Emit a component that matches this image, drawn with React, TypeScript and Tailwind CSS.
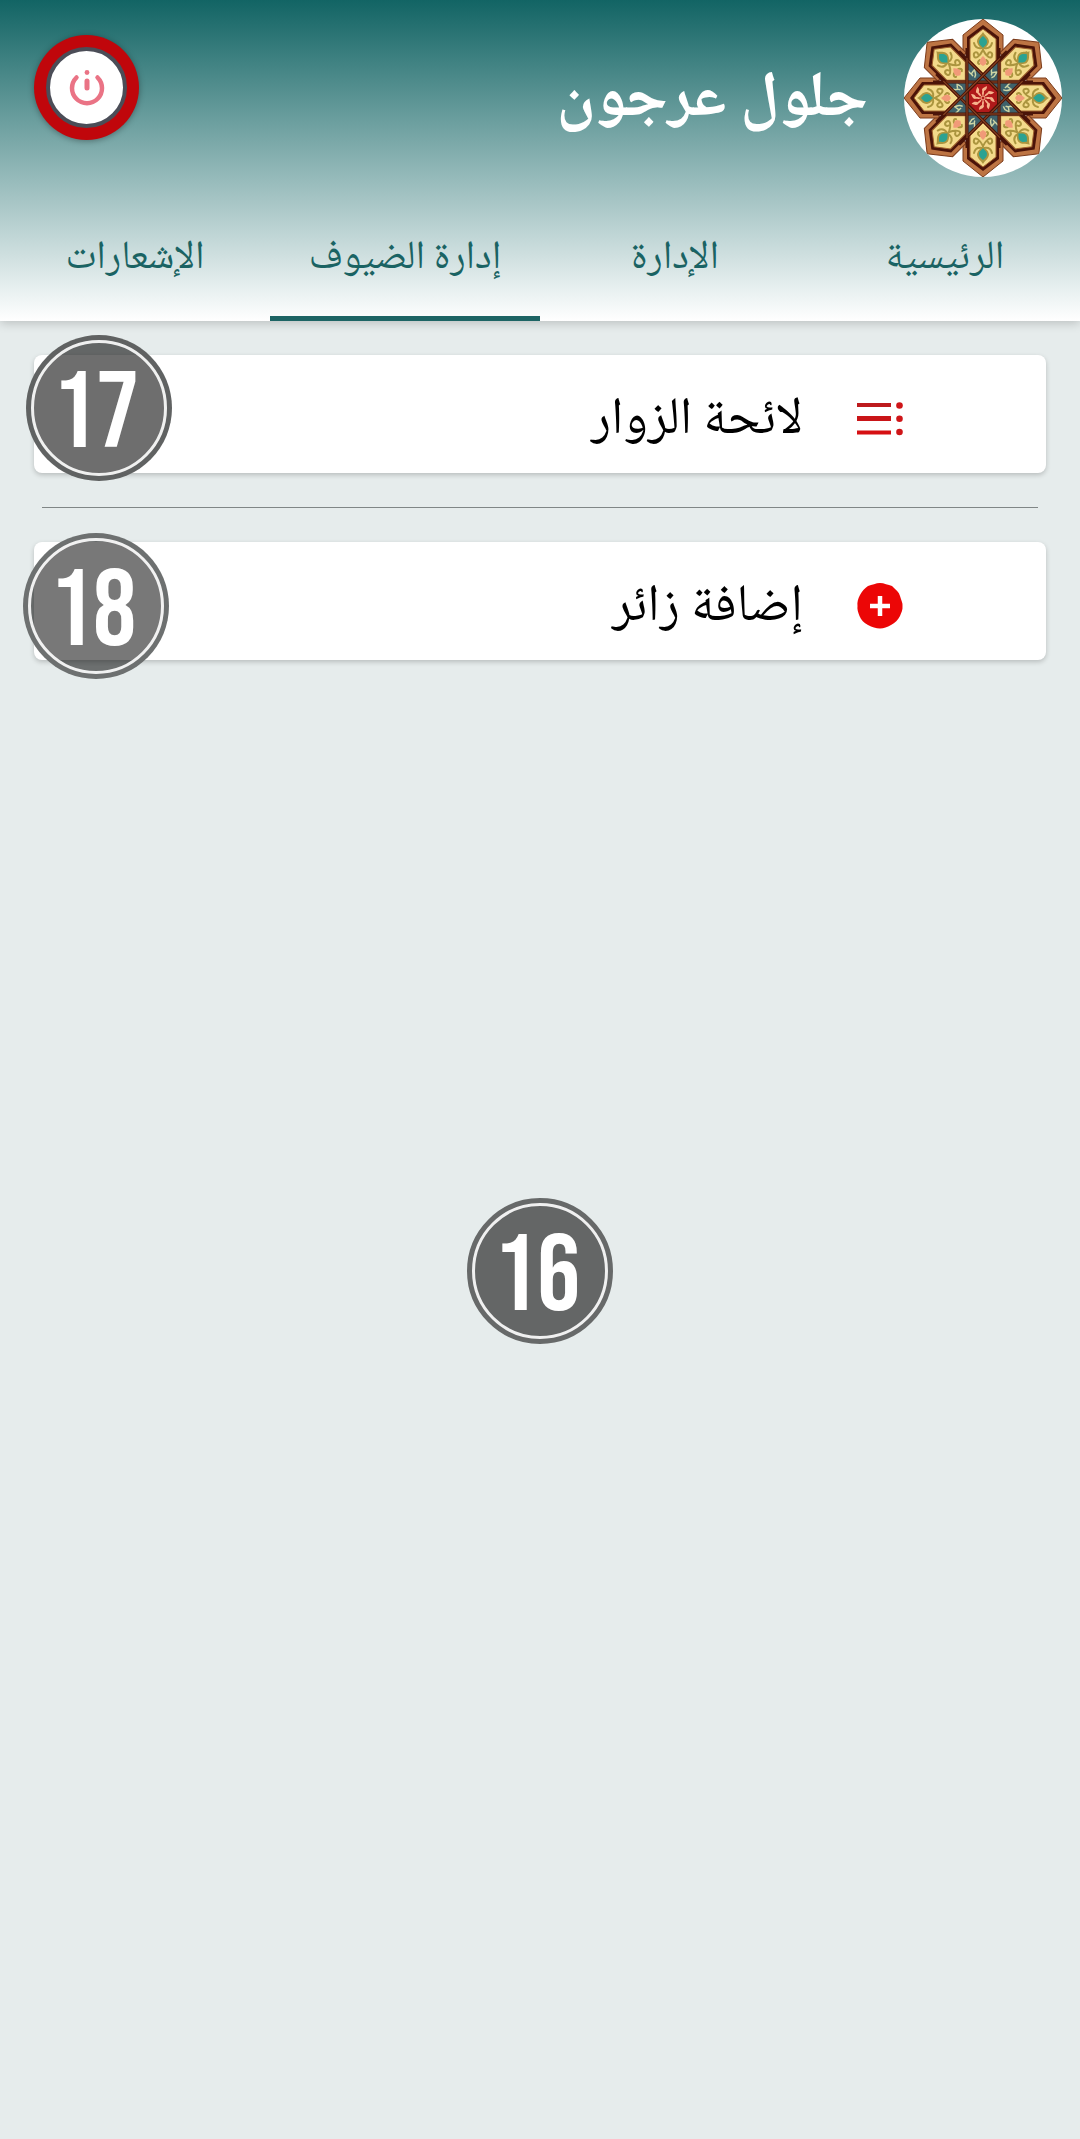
import type { ReactNode } from "react";

const TURNS = [0, 45, 90, 135, 180, 225, 270, 315];

function Petal({ angle }: { angle: number }) {
  return (
    <g transform={`rotate(${angle})`}>
      <path d="M0-79 20-63V-44H-20V-63Z" fill="#bd7443" stroke="#7c3c1c" strokeWidth="1" />
      <path d="M0-73 16-61V-38H-16V-61Z" fill="#4b1409" />
    </g>
  );
}

function PetalInside({ angle }: { angle: number }) {
  return (
    <g transform={`rotate(${angle})`}>
      <path d="M0-69 13-59V-38L0-25-13-38V-59Z" fill="#f3da8b" stroke="#a0622f" strokeWidth="1" />
      <g fill="none" stroke="#ab953f" strokeWidth="2" strokeLinecap="round">
        <path d="M0-48C-3-42-8-38-9-42-10-46-6-47-5-44" />
        <path d="M0-48C3-42 8-38 9-42 10-46 6-47 5-44" />
        <path d="M-1-50C-6-49-8-51-9-55M1-50C6-49 8-51 9-55" />
        <path d="M-4-34C-6-35-5-37-3-38M4-34C6-35 5-37 3-38" />
      </g>
      <path d="M0-66C2-62 6-61 6-56 5-52 2-50 0-49-2-50-5-52-6-56-6-61-2-62 0-66Z" fill="#ab953f" />
      <path d="M0-62C2-60 4-59 4-56 4-53 1-52 0-50-1-52-4-53-4-56-4-59-2-60 0-62Z" fill="#2ba291" />
      <path d="M0-42C3-39 4-37 3-34L0-32-3-34C-4-37-3-39 0-42Z" fill="#f19a78" />
    </g>
  );
}

function Emblem() {
  return (
    <svg viewBox="-79 -79 158 158" className="size-[158px] shrink-0 rounded-full bg-white" role="img" aria-label="شعار">
      {TURNS.map((a) => <Petal key={a} angle={a} />)}
      <circle r="42" fill="#4b1409" />
      {TURNS.map((a) => <path key={a} transform={`rotate(${a})`} d="M16-16H38L16 6Z" fill="#3e626b" />)}
      {TURNS.map((a) => <PetalInside key={a} angle={a} />)}
      {TURNS.map((a) => (
        <path
          key={a}
          transform={`rotate(${a + 22.5})`}
          d="M-3-31C-4-28-1-28-1-24M3-30C2-27 4-25 0-22M-1-27 2-29"
          fill="none"
          stroke="#cfd6a5"
          strokeWidth="1.5"
        />
      ))}
      {TURNS.map((a) => (
        <g key={a} transform={`rotate(${a})`}>
          <path d="M-50-16H50" stroke="#4b1409" strokeWidth="3" />
          <path d="M-40-16H40" stroke="#8e4a26" strokeWidth="1" />
        </g>
      ))}
      <path d="M-6-14H6L14-6V6L6 14H-6L-14 6V-6Z" fill="#b01a1a" />
      {TURNS.map((a) => (
        <path key={a} transform={`rotate(${a})`} d="M0-2C-2-5 0-6-1-8-1-10 2-11 4-12 4-9 3-8 1-7 1-5 1-4 0-2Z" fill="#f7b48c" />
      ))}
      <circle r="2" fill="#b01a1a" stroke="#f7b48c" strokeWidth="1" />
    </svg>
  );
}

function PowerIcon() {
  return (
    <svg viewBox="0 0 36 36" className="size-9" fill="none" stroke="#ea7385" strokeWidth="4.500" strokeLinecap="round" aria-hidden="true">
      <path d="M7.500 7.500A15 15 0 1 0 28.500 7.500" />
      <path d="M18 11V18" strokeWidth="5" />
      <circle cx="18" cy="2.500" r="2.400" fill="#ea7385" stroke="none" />
    </svg>
  );
}

function ListIcon() {
  return (
    <svg viewBox="0 0 46 34" className="w-[46px]" aria-hidden="true">
      <path d="M0 1H34V5H0Z" fill="#bd1a1d" />
      <path d="M0 14H34V19H0Z" fill="#c91518" />
      <path d="M0 28.500H34V32.500H0Z" fill="#d61013" />
      <circle cx="42.500" cy="3.500" r="3.300" fill="#cf1518" />
      <circle cx="42.500" cy="16.700" r="3.300" fill="#cf1518" />
      <circle cx="42.500" cy="30" r="3.300" fill="#cf1518" />
    </svg>
  );
}

function AddIcon() {
  return (
    <svg viewBox="0 0 46 46" className="w-[46px]" aria-hidden="true">
      <path d="M23 0C27 0 31 2 35 3 39 7 42 9 43 13 44 17 46 20 45.500 23 46 27 44 30 43 33 41 37 38 40 34 42 30 44 27 45.500 23 45.500 19 45.500 15 44 11 42 7 40 4 37 2.500 33 1 29 0 26 .5 23 0 19 1 16 3 12 5 8 8 5 11 3 15 2 19 0 23 0Z" fill="#ec0606" />
      <path d="M23 13V33M13 23H33" stroke="#fff" strokeWidth="4.500" />
    </svg>
  );
}

function Badge({ value, className }: { value: number; className: string }) {
  return (
    <span dir="ltr" className={`absolute flex size-[146px] rounded-full border-[5px] ${className}`}>
      <span className="flex flex-1 items-center justify-center rounded-full border-3 border-white/90 pt-[14px] pe-[6px] font-['Bebas_Neue','Oswald','Roboto_Condensed',sans-serif] text-[108px] leading-none font-normal text-white">
        {value}
      </span>
    </span>
  );
}

function Card({ label, icon, children }: { label: string; icon: ReactNode; children: ReactNode }) {
  return (
    <div className="relative">
      <button
        type="button"
        className="flex h-[118px] w-full items-center gap-[54px] rounded-lg bg-white ps-[143px] text-[52px] leading-[88px] text-black shadow-[0_2px_5px_rgba(0,0,0,0.2)]"
      >
        <span className="flex pt-[10px]">{icon}</span>
        <span className="pt-4">{label}</span>
      </button>
      {children}
    </div>
  );
}

const TABS = ["الرئيسية", "الإدارة", "إدارة الضيوف", "الإشعارات"];

export default function App() {
  return (
    <div dir="rtl" className="relative flex min-h-screen flex-col bg-[#e6ecec] font-['Noto_Naskh_Arabic','Noto_Sans_Arabic','DejaVu_Sans',sans-serif]">
      <header className="bg-linear-to-b/srgb from-[#126464] to-white shadow-[0_2px_10px_rgba(0,0,0,0.2)]">
        <div className="flex items-start pt-[19px] ps-[18px] pe-[34px]">
          <Emblem />
          <h1 className="ms-9 mt-9 flex-1 text-[64px] leading-[96px] font-bold text-white">جلول عرجون</h1>
          <button
            type="button"
            aria-label="خروج"
            className="mt-4 flex size-[105px] items-center justify-center rounded-full bg-[#c0060b] shadow-[0_1px_6px_rgba(0,0,0,0.35)]"
          >
            <span className="flex size-[81px] items-center justify-center rounded-full border-4 border-[#4b4d57] bg-white">
              <PowerIcon />
            </span>
          </button>
        </div>
        <nav className="grid h-36 grid-cols-4">
          {TABS.map((tab, i) => (
            <button
              type="button"
              key={tab}
              aria-current={i === 2 ? "page" : undefined}
              className={`border-b-5 pt-6 text-[40px] leading-[64px] text-[#1a6363] ${i === 2 ? "border-[#1d6464]" : "border-transparent"}`}
            >
              {tab}
            </button>
          ))}
        </nav>
      </header>
      <main className="flex flex-col gap-[34px] p-[34px]">
        <Card label="لائحة الزوار" icon={<ListIcon />}>
          <Badge value={17} className="-top-5 -left-2 border-[#5f6161]/95 bg-black/57" />
        </Card>
        <hr className="mx-2 h-px border-0 bg-[#808686]" />
        <Card label="إضافة زائر" icon={<AddIcon />}>
          <Badge value={18} className="-top-[9px] -left-[11px] border-[#6d7070]/95 bg-black/53" />
        </Card>
      </main>
      <Badge value={16} className="top-[1198px] left-1/2 -translate-x-1/2 border-[#676969] bg-[#646666]" />
    </div>
  );
}
